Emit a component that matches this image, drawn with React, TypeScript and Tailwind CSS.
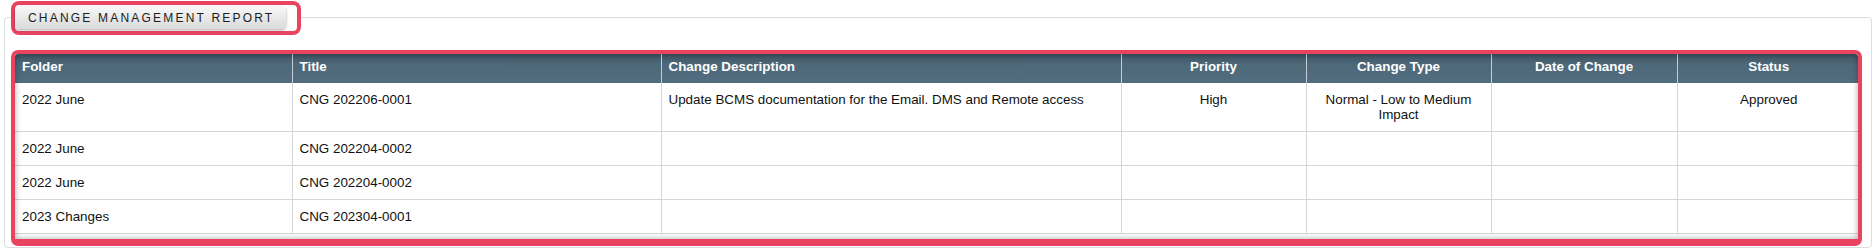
import React from 'react';

interface ChangeRow {
  folder: string;
  title: string;
  description: string;
  priority: string;
  changeType: string;
  date: string;
  status: string;
}

const rows: ChangeRow[] = [
  {
    folder: '2022 June',
    title: 'CNG 202206-0001',
    description: 'Update BCMS documentation for the Email. DMS and Remote access',
    priority: 'High',
    changeType: 'Normal - Low to Medium Impact',
    date: '',
    status: 'Approved',
  },
  { folder: '2022 June', title: 'CNG 202204-0002', description: '', priority: '', changeType: '', date: '', status: '' },
  { folder: '2022 June', title: 'CNG 202204-0002', description: '', priority: '', changeType: '', date: '', status: '' },
  { folder: '2023 Changes', title: 'CNG 202304-0001', description: '', priority: '', changeType: '', date: '', status: '' },
];

const columns = [
  { label: 'Folder', width: 'w-[277px]', align: 'text-left' },
  { label: 'Title', width: 'w-[369px]', align: 'text-left' },
  { label: 'Change Description', width: 'w-[460px]', align: 'text-left' },
  { label: 'Priority', width: 'w-[185px]', align: 'text-center' },
  { label: 'Change Type', width: 'w-[185px]', align: 'text-center' },
  { label: 'Date of Change', width: 'w-[186px]', align: 'text-center' },
  { label: 'Status', width: 'w-[183px]', align: 'text-center' },
];

export default function App() {
  return (
    <div className="w-[1876px] h-[250px] bg-white pt-[17px] px-[4px] font-['Liberation_Sans',Arial,sans-serif]">
      {/* Report fieldset */}
      <div className="h-[231px] border border-[#dcdcdc] rounded-[4px] pl-[6px] pr-[9px]">
        {/* Legend button */}
        <div className="-mt-[17px] w-fit flex border-4 border-[#e8445f] rounded-[8px] bg-white pt-[1px] pb-[2px] pr-[11px]">
          <div className="w-[271px] h-[23px] flex items-center pl-[13px] rounded-[4px] bg-[linear-gradient(to_bottom,#f8f8f8,#dadada)] shadow-[0_1px_3px_rgba(0,0,0,0.35)] text-[12px] tracking-[2.2px] text-[#1c1c1c]">
            CHANGE MANAGEMENT REPORT
          </div>
        </div>

        {/* Table */}
        <div className="mt-[15px] border-4 border-b-[7px] border-[#e8445f] rounded-[7px] overflow-hidden">
          <div className="relative bg-white pb-[5px]">
            <table className="table-fixed w-[1845px] border-collapse text-[13.4px] leading-[15px]">
              <colgroup>
                {columns.map(c => (
                  <col key={c.label} className={c.width} />
                ))}
              </colgroup>
              <thead>
                <tr className="bg-[linear-gradient(to_bottom,#3d5464_0%,#4d6879_35%,#516d7f_100%)]">
                  {columns.map((c, i) => (
                    <th
                      key={c.label}
                      className={`${c.align} ${i > 0 ? 'border-l border-[#c4cdd3]' : ''} px-[7px] pt-[5px] pb-[9px] font-bold text-white`}
                    >
                      {c.label}
                    </th>
                  ))}
                </tr>
              </thead>
              <tbody className="text-[#111]">
                {rows.map((r, idx) => {
                  const cells = [r.folder, r.title, r.description, r.priority, r.changeType, r.date, r.status];
                  return (
                    <tr key={idx} className="border-b border-[#d6d6d6]">
                      {cells.map((v, i) => (
                        <td
                          key={i}
                          className={`${columns[i].align} ${i > 0 ? 'border-l border-[#d6d6d6]' : ''} align-top px-[7px] pt-[9px] pb-[9px]`}
                        >
                          {v}
                        </td>
                      ))}
                    </tr>
                  );
                })}
              </tbody>
            </table>
            {/* inner shadow overlay */}
            <div className="pointer-events-none absolute inset-0 shadow-[inset_0_0_6px_rgba(0,0,0,0.35)]" />
          </div>
        </div>
      </div>
    </div>
  );
}
